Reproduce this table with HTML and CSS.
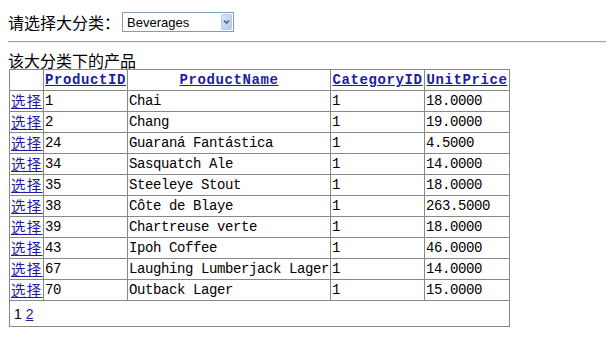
FILE: index.html
```html
<!DOCTYPE html>
<html lang="zh-CN">
  <head>
    <meta charset="UTF-8" />
    <title>产品分类</title>
    <link rel="stylesheet" href="styles.css">
  </head>
  <body>
    <!-- Category Picker -->
    <div class="picker">
      <span class="picker-label">请选择大分类：</span>
      <select class="picker-select">
        <option>Beverages</option>
        <option>Condiments</option>
        <option>Confections</option>
      </select>
    </div>
    <hr class="divider" />
    <!-- Product Grid -->
    <div class="grid-title">该大分类下的产品</div>
    <table class="grid">
      <colgroup>
        <col class="c-select" />
        <col class="c-id" />
        <col class="c-name" />
        <col class="c-cat" />
        <col class="c-price" />
      </colgroup>
      <thead>
        <tr>
          <th></th>
          <th><a href="#">ProductID</a></th>
          <th><a href="#">ProductName</a></th>
          <th><a href="#">CategoryID</a></th>
          <th><a href="#">UnitPrice</a></th>
        </tr>
      </thead>
      <tbody>
        <tr><td class="cmd"><a href="#">选择</a></td><td>1</td><td>Chai</td><td>1</td><td>18.0000</td></tr>
        <tr><td class="cmd"><a href="#">选择</a></td><td>2</td><td>Chang</td><td>1</td><td>19.0000</td></tr>
        <tr><td class="cmd"><a href="#">选择</a></td><td>24</td><td>Guaraná Fantástica</td><td>1</td><td>4.5000</td></tr>
        <tr><td class="cmd"><a href="#">选择</a></td><td>34</td><td>Sasquatch Ale</td><td>1</td><td>14.0000</td></tr>
        <tr><td class="cmd"><a href="#">选择</a></td><td>35</td><td>Steeleye Stout</td><td>1</td><td>18.0000</td></tr>
        <tr><td class="cmd"><a href="#">选择</a></td><td>38</td><td>Côte de Blaye</td><td>1</td><td>263.5000</td></tr>
        <tr><td class="cmd"><a href="#">选择</a></td><td>39</td><td>Chartreuse verte</td><td>1</td><td>18.0000</td></tr>
        <tr><td class="cmd"><a href="#">选择</a></td><td>43</td><td>Ipoh Coffee</td><td>1</td><td>46.0000</td></tr>
        <tr><td class="cmd"><a href="#">选择</a></td><td>67</td><td>Laughing Lumberjack Lager</td><td>1</td><td>14.0000</td></tr>
        <tr><td class="cmd"><a href="#">选择</a></td><td>70</td><td>Outback Lager</td><td>1</td><td>15.0000</td></tr>
        <tr class="pager"><td colspan="5"><span>1</span> <a href="#">2</a></td></tr>
      </tbody>
    </table>
  </body>
</html>
```

FILE: styles.css
```css
/* Base */
body {
  margin: 8px;
  background: #fff;
  color: #000;
  font-family: "Noto Sans CJK SC", sans-serif;
  font-size: 16px;
}

a {
  color: #1c1ca8;
}

/* Category Picker */
.picker {
  display: flex;
  align-items: center;
  gap: 2px;
  padding-top: 4px;
  height: 20px;
}

.picker-label {
  line-height: 20px;
}

.picker-select {
  appearance: none;
  -webkit-appearance: none;
  width: 112px;
  height: 20px;
  margin: 0;
  padding: 0 0 0 4px;
  border: 1px solid #7f9db9;
  border-radius: 0;
  font-family: "Liberation Sans", Arial, sans-serif;
  font-size: 13px;
  color: #000;
  background-color: #fff;
  background-image: url("data:image/svg+xml;utf8,<svg xmlns='http://www.w3.org/2000/svg' width='11' height='16'><defs><linearGradient id='g' x1='0' y1='0' x2='1' y2='1'><stop offset='0' stop-color='%23dbe6fd'/><stop offset='1' stop-color='%23b0c6f4'/></linearGradient></defs><rect x='0.5' y='0.5' width='10' height='15' rx='1' fill='url(%23g)' stroke='%23b7c9ee'/><path d='M3 6.5 L5.5 9 L8 6.5' fill='none' stroke='%234d6185' stroke-width='1.6'/></svg>");
  background-repeat: no-repeat;
  background-position: right 1px center;
}

/* Divider */
.divider {
  margin: 9px 0 8px;
  border: 0;
  border-top: 1px solid #a0a0a0;
  border-bottom: 1px solid #eee;
}

.grid-title {
  line-height: 18px;
}

/* Product Grid */
.grid {
  margin-left: 1px;
  border-collapse: collapse;
  table-layout: fixed;
  width: 500px;
  border: 1px solid #888;
  font-family: "Liberation Mono", monospace;
  font-size: 14px;
  letter-spacing: -0.4px;
}

.c-select { width: 34px; }
.c-id { width: 84px; }
.c-name { width: 203px; }
.c-cat { width: 94px; }
.c-price { width: 85px; }

.grid th,
.grid td {
  border: 1px solid #888;
  padding: 1px 1px;
  height: 18px;
  line-height: 18px;
  white-space: nowrap;
  overflow: hidden;
}

.grid th {
  text-align: center;
  font-weight: bold;
  letter-spacing: 0.6px;
}

.grid th:first-child {
  text-align: left;
}

.grid td {
  text-align: left;
}

.grid td.cmd {
  padding: 1px 0 1px 1px;
  font-family: "Noto Sans CJK SC", sans-serif;
  font-size: 14.4px;
  line-height: 18px;
  letter-spacing: 1.4px;
}

.grid .pager td {
  height: 25px;
  padding: 0 4px;
  letter-spacing: 0;
  font-family: "Liberation Sans", sans-serif;
  font-size: 14px;
}
```
